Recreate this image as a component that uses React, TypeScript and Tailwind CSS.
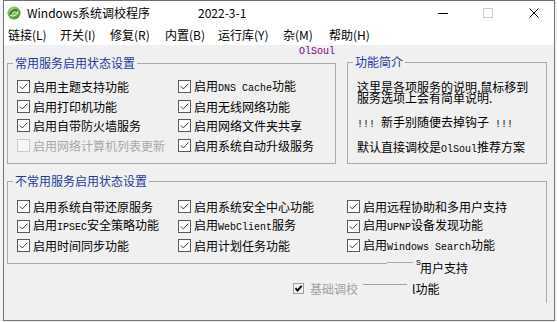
import React from "react";

const mono = "font-['Liberation_Mono',monospace] text-[10px]";

function Check({ checked = true, disabled = false }: { checked?: boolean; disabled?: boolean }) {
  return (
    <span
      className={`inline-flex w-[13px] h-[13px] shrink-0 items-center justify-center border ${
        disabled ? "border-[#cccccc] bg-[#f6f6f6]" : "border-[#5a5a5a] bg-white"
      }`}
    >
      {checked && (
        <svg width="11" height="11" viewBox="0 0 11 11">
          <path d="M1.8 5.4 L4.3 7.9 L9.4 2.6" fill="none" stroke="#3a3a3a" strokeWidth="1" />
        </svg>
      )}
    </span>
  );
}

function Item({ children, disabled = false }: { children: React.ReactNode; disabled?: boolean }) {
  return (
    <div className="flex items-center h-[19.5px]">
      <Check checked={!disabled} disabled={disabled} />
      <span
        className={`ml-[3px] text-[12px] leading-[19.5px] whitespace-nowrap ${
          disabled ? "text-[#a8a8a8]" : "text-black"
        }`}
      >
        {children}
      </span>
    </div>
  );
}

function Logo() {
  return (
    <svg width="14" height="14" viewBox="0 0 14 14">
      <defs>
        <radialGradient id="lg" cx="40%" cy="35%" r="70%">
          <stop offset="0" stopColor="#b8e68e" />
          <stop offset="1" stopColor="#3a8c22" />
        </radialGradient>
      </defs>
      <circle cx="7" cy="7" r="6.5" fill="url(#lg)" />
      <path d="M3.2 8.8 C3.6 4.6 7.8 2.8 10.6 5" stroke="#2a6c16" strokeWidth="1.4" fill="none" />
      <path d="M10.8 5.4 C10.4 9.6 6.2 11.2 3.4 9" stroke="#e6f6d2" strokeWidth="1.1" fill="none" />
    </svg>
  );
}

export default function App() {
  return (
    <div className="w-[557px] h-[322px] bg-[#f4f4f4] font-['Noto_Sans_CJK_SC',sans-serif] text-black">
      <div className="ml-[3px] w-[552px] h-[321px] border border-[#737373] flex flex-col">
        {/* Title bar */}
        <div className="h-[24px] shrink-0 bg-white flex items-center text-[12px]">
          <span className="ml-[3px] flex items-center">
            <Logo />
          </span>
          <span className="ml-[6px] w-[171px] shrink-0 whitespace-nowrap">Windows系统调校程序</span>
          <span className="whitespace-nowrap">2022-3-1</span>
          <div className="ml-auto flex items-center pr-[15px]">
            <span className="block w-[10px] h-px bg-black" />
            <span className="block ml-[35px] w-[10px] h-[10px] border border-[#cccccc]" />
            <svg className="ml-[36px]" width="10" height="10" viewBox="0 0 10 10">
              <path d="M0.5 0.5 L9.5 9.5 M9.5 0.5 L0.5 9.5" stroke="#000" strokeWidth="1" />
            </svg>
          </div>
        </div>

        {/* Menu bar */}
        <div className="h-[20px] shrink-0 bg-white flex items-center pl-[4px] text-[12px] whitespace-nowrap">
          <span className="w-[52px]">链接(L)</span>
          <span className="w-[50px]">开关(I)</span>
          <span className="w-[55px]">修复(R)</span>
          <span className="w-[53px]">内置(B)</span>
          <span className="w-[65px]">运行库(Y)</span>
          <span className="w-[46px]">杂(M)</span>
          <span>帮助(H)</span>
        </div>

        {/* Client area */}
        <div className="flex-1 bg-[#f0f0f0] flex flex-col text-[12px]">
          <div className="h-[10px] pl-[295px]">
            <span className={`block leading-[14px] text-[#800080] ${mono}`}>OlSoul</span>
          </div>

          <div className="h-[109px] flex ml-[3px]">
            <fieldset className="w-[329px] h-[109px] border border-[#a9a9a9]">
              <legend className="ml-[5px] px-[2px] leading-[16px] text-[#1e3a9e]">常用服务启用状态设置</legend>
              <div className="pt-[6px] pl-[9px] grid grid-cols-[161px_1fr]">
                <Item>启用主题支持功能</Item>
                <Item>
                  启用<span className={mono}>DNS Cache</span>功能
                </Item>
                <Item>启用打印机功能</Item>
                <Item>启用无线网络功能</Item>
                <Item>启用自带防火墙服务</Item>
                <Item>启用网络文件夹共享</Item>
                <Item disabled>启用网络计算机列表更新</Item>
                <Item>启用系统自动升级服务</Item>
              </div>
            </fieldset>

            <fieldset className="ml-[11px] w-[200px] h-[109px] border border-[#a9a9a9]">
              <legend className="ml-[5px] px-[2px] leading-[14px] text-[#1e3a9e]">功能简介</legend>
              <div className="pl-[9px] leading-[11px] whitespace-nowrap">
                <div className="mt-[12px]">这里是各项服务的说明,鼠标移到</div>
                <div>服务选项上会有简单说明.</div>
                <div className="mt-[13px]">
                  <span className={mono}>!!! </span>新手别随便去掉钩子<span className={mono}> !!!</span>
                </div>
                <div className="mt-[11px]">
                  默认直接调校是<span className={mono}>OlSoul</span>推荐方案
                </div>
              </div>
            </fieldset>
          </div>

          <fieldset className="ml-[3px] mt-[9px] w-[540px] h-[90px] border border-b-0 border-[#a9a9a9]">
            <legend className="ml-[5px] px-[2px] leading-[16px] text-[#1e3a9e]">不常用服务启用状态设置</legend>
            <div className="pt-[8px] pl-[9px] grid grid-cols-[161px_169px_1fr]">
              <Item>启用系统自带还原服务</Item>
              <Item>启用系统安全中心功能</Item>
              <Item>启用远程协助和多用户支持</Item>
              <Item>
                启用<span className={mono}>IPSEC</span>安全策略功能
              </Item>
              <Item>
                启用<span className={mono}>WebClient</span>服务
              </Item>
              <Item>
                启用<span className={mono}>UPNP</span>设备发现功能
              </Item>
              <Item>启用时间同步功能</Item>
              <Item>启用计划任务功能</Item>
              <Item>
                启用<span className={mono}>Windows Search</span>功能
              </Item>
            </div>
          </fieldset>

          {/* glitched bottom region */}
          <div className="relative h-[57px]">
            <div className="absolute left-[3px] top-0 w-[380px] h-px bg-[#a9a9a9]" />
            <div className="absolute left-[383px] top-[-1px] w-[26px] h-px bg-[#a9a9a9]" />
            <div className="absolute left-[542px] top-0 w-px h-[40px] bg-[#a9a9a9]" />
            <span className="absolute left-[412px] top-[-5px] leading-[10px] text-[8px] font-['Liberation_Mono',monospace]">S</span>
            <span className="absolute left-[416px] top-[-2px] leading-[14px] whitespace-nowrap">用户支持</span>

            <span className="absolute left-[289px] top-[20px] w-[11px] h-[11px] border border-[#a0a0a0] bg-[#f0f0f0] flex items-center justify-center">
              <svg width="9" height="9" viewBox="0 0 9 9">
                <path d="M1.5 4.2 L3.6 6.6 L7.6 1.8" fill="none" stroke="#000" strokeWidth="1.8" />
              </svg>
            </span>
            <span className="absolute left-[306px] top-[19px] leading-[14px] text-[#a0a0a0] whitespace-nowrap">基础调校</span>
            <div className="absolute left-[359px] top-[21px] w-[44px] h-px bg-[#a0a0a0]" />
            <span className="absolute left-[408px] top-[19px] leading-[14px] whitespace-nowrap">l功能</span>
          </div>
        </div>
      </div>
    </div>
  );
}
